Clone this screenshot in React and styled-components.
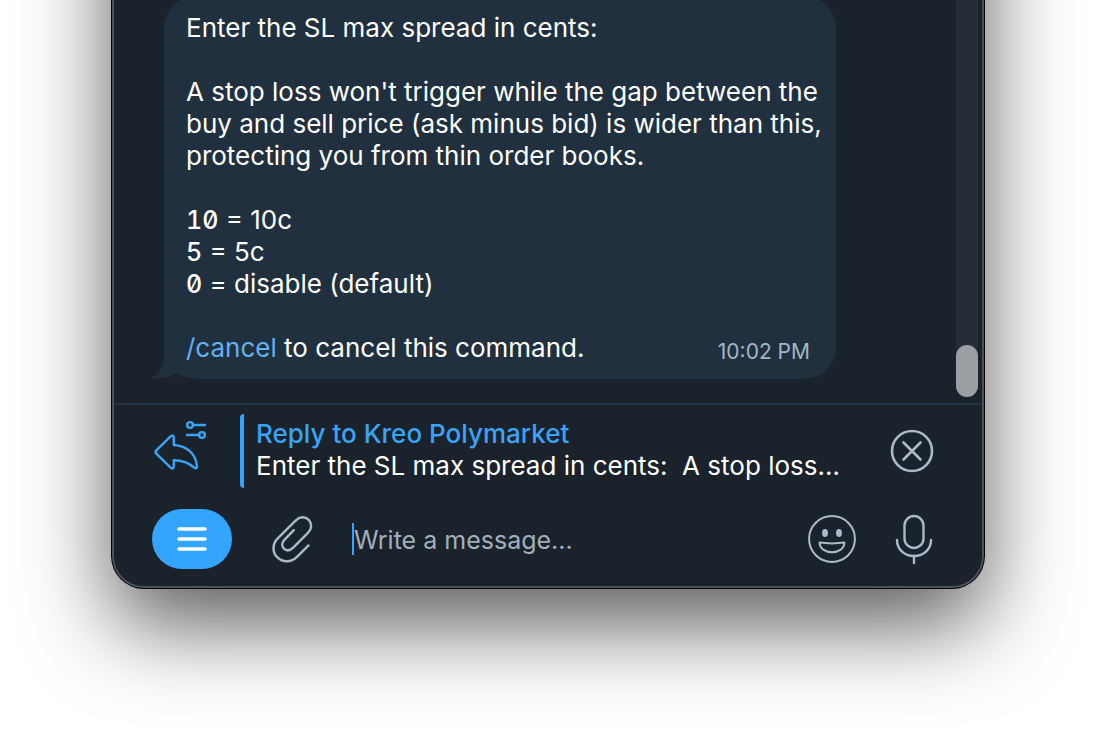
import React, { useState } from 'react'
import styled, { createGlobalStyle } from 'styled-components';

const GlobalStyle = createGlobalStyle`
*{
box-sizing:border-box;
margin:0;
padding:0;
}
body{
background:#ffffff;
font-family:Inter, "Liberation Sans", sans-serif;
overflow:hidden;
}
`;

const Page = styled.div`
height:100vh;
padding:0 112px 149px;
display:flex;
flex-direction:column;
justify-content:flex-end;
overflow:hidden;
`;

const Window = styled.main`
min-height:120vh;
flex-shrink:0;
display:flex;
flex-direction:column;
background:#1a222c;
border:2px solid #4a5159;
border-radius:32px;
box-shadow:0 0 0 1px #000000, 0 36px 88px rgba(0,0,0,0.65);
overflow:hidden;
`;

const Chat = styled.section`
flex:1;
display:flex;
border-bottom:2px solid #26333f;
`;

const Messages = styled.div`
flex:1;
min-width:0;
display:flex;
flex-direction:column;
justify-content:flex-end;
align-items:flex-start;
padding:0 50px 24px;
`;

const Bubble = styled.article`
position:relative;
width:100%;
max-width:672px;
padding:16px 12px 15px 22px;
border-radius:32px;
background:#21303e;
color:#ffffff;
font-size:26px;
line-height:32px;
`;

const Tail = styled.svg`
position:absolute;
left:-12px;
bottom:0;
fill:#21303e;
`;

const Text = styled.p`
min-height:32px;
white-space:pre;
`;

const Code = styled.code`
font-family:inherit;
font-size:25px;
font-weight:500;
font-feature-settings:"tnum", "zero";
`;

const Command = styled.a`
color:#62b1f1;
text-decoration:none;
`;

const LastLine = styled.div`
display:flex;
justify-content:space-between;
align-items:flex-end;
padding-right:14px;
`;

const Time = styled.time`
font-size:21px;
line-height:24px;
color:#a3b5c6;
white-space:nowrap;
`;

const ScrollTrack = styled.div`
width:22px;
margin:0 4px 6px 0;
display:flex;
align-items:flex-end;
border-radius:11px;
background:#252e37;
`;

const ScrollThumb = styled.div`
width:100%;
height:52px;
border-radius:11px;
background:#9b9fa4;
`;

const ReplyBar = styled.section`
height:92px;
padding:0 46px 0 38px;
display:flex;
align-items:center;
`;

const Quote = styled.div`
flex:1;
min-width:0;
height:74px;
margin:0 48px 0 32px;
padding:4px 0 0 12px;
border-left:4px solid #33a5ff;
border-radius:4px 0 0 4px;
font-size:26px;
line-height:32px;
`;

const QuoteTitle = styled.p`
color:#3ba3f5;
font-weight:500;
`;

const QuoteText = styled.p`
color:#ffffff;
white-space:pre;
`;

const Composer = styled.form`
padding:12px 44px 17px 38px;
display:flex;
align-items:center;
`;

const IconButton = styled.button`
width:${props => props.$width || 48}px;
height:48px;
flex-shrink:0;
display:flex;
justify-content:center;
align-items:center;
border:none;
background:none;
color:${props => props.$color || '#a9bacb'};
cursor:pointer;
`;

const MenuButton = styled(IconButton)`
height:60px;
border-radius:30px;
background:#33a5ff;
`;

const Field = styled.div`
flex:1;
min-width:0;
display:flex;
align-items:center;
margin:0 34px 0 36px;
`;

const Caret = styled.span`
width:2px;
height:32px;
flex-shrink:0;
background:#33a5ff;
`;

const Input = styled.input`
flex:1;
min-width:0;
height:36px;
padding-top:2px;
border:none;
outline:none;
background:none;
color:#ffffff;
caret-color:#33a5ff;
font-family:inherit;
font-size:25px;
&::placeholder{
color:#a3afba;
opacity:1;
}
`;

const ComposerActions = styled.div`
display:flex;
gap:34px;
`;

const Icon = styled.svg`
display:block;
flex-shrink:0;
overflow:visible;
fill:none;
stroke:currentColor;
stroke-width:${props => props.$stroke || 2.6};
stroke-linecap:round;
stroke-linejoin:round;
`;

const ClipSlot = styled.div`
margin-left:36px;
`;

const ReplyIcon = () => (
    <Icon width="56" height="56" viewBox="0 2 56 56" $stroke={2.4}>
        <path d="M4.300 32.600c-1.100-1.100-1.100-2.200 0-3.300L18.600 15.400c1.500-1.400 3.200-.8 3.200 1.300v7.300c13 .9 22 8.500 23.200 21.300.2 1.900-1.400 2.500-2.800 1.200-5.400-4.800-11.400-7.300-20.400-7.300v6.300c0 2.100-1.700 2.700-3.200 1.200z" />
        <circle cx="38" cy="4" r="2.900" />
        <path d="M41 4h12M35 14h12" />
        <circle cx="50" cy="14" r="2.900" />
    </Icon>
);

const CloseIcon = () => (
    <Icon width="48" height="48" viewBox="0 0 48 48">
        <circle cx="24" cy="24" r="20" />
        <path d="M15.500 15.500l17 17M32.500 15.500l-17 17" />
    </Icon>
);

const MenuIcon = () => (
    <Icon width="48" height="48" viewBox="0 0 48 48" $stroke={3.6}>
        <path d="M11 14h26M11 24h26M11 34h26" />
    </Icon>
);

const ClipIcon = () => (
    <Icon width="48" height="48" viewBox="2 0 48 48" $stroke={2.4}>
        <path d="M42.500 30.400L31 41.800c-6 5.800-14.300 5.800-19.600.6-5.400-5.400-5.200-13.500.6-19.200L29.600 5.600c4.200-4.200 9.500-4.300 13.100-.8 3.500 3.600 3.400 8.800-.8 13L27.200 32.600c-3.200 3.200-6.800 3.300-9.300 1-2.400-2.500-2.300-6.200.9-9.300L27.800 15.200" />
    </Icon>
);

const SmileIcon = () => (
    <Icon width="48" height="48" viewBox="0 0 48 48" $stroke={2}>
        <circle cx="24" cy="24" r="22.900" />
        <ellipse cx="17" cy="18" rx="3" ry="4" fill="currentColor" stroke="none" />
        <ellipse cx="31" cy="18" rx="3" ry="4" fill="currentColor" stroke="none" />
        <path d="M11.600 27.600q12.400 1.600 24.800 0c0 6-5.600 9.600-12.400 9.600s-12.400-3.600-12.400-9.600z" />
    </Icon>
);

const MicIcon = () => (
    <Icon width="48" height="50" viewBox="0 0 48 50" $stroke={2.4}>
        <rect x="14.500" y="2" width="19" height="32" rx="9.500" />
        <path d="M7 26c0 9 7 16 17 16S41 35 41 26M24 42v7" />
    </Icon>
);

const Message = ({ time }) => {
    return (
        <Bubble>
            <Text>Enter the SL max spread in cents:</Text>
            <Text />
            <Text>A stop loss won't trigger while the gap between the</Text>
            <Text>buy and sell price (ask minus bid) is wider than this,</Text>
            <Text>protecting you from thin order books.</Text>
            <Text />
            <Text><Code>10</Code> = 10c</Text>
            <Text><Code>5</Code> = 5c</Text>
            <Text><Code>0</Code> = disable (default)</Text>
            <Text />
            <LastLine>
                <Text><Command href="#cancel">/cancel</Command> to cancel this command.</Text>
                <Time>{time}</Time>
            </LastLine>
            <Tail width="34" height="30" viewBox="0 0 34 30">
                <path d="M12 0V12C10 20 6 25 0 28.500V30C10 29.800 20 28 27 22L34 10V0z" />
            </Tail>
        </Bubble>
    )
}

const App = () => {
    const [draft, setDraft] = useState('');

    return (
        <>
            <GlobalStyle />
            <Page>
                <Window>
                    <Chat>
                        <Messages>
                            <Message time="10:02 PM" />
                        </Messages>
                        <ScrollTrack>
                            <ScrollThumb />
                        </ScrollTrack>
                    </Chat>
                    <ReplyBar>
                        <IconButton as="span" $width={56} $color="#3ba3f5">
                            <ReplyIcon />
                        </IconButton>
                        <Quote>
                            <QuoteTitle>Reply to Kreo Polymarket</QuoteTitle>
                            <QuoteText>Enter the SL max spread in cents:  A stop loss...</QuoteText>
                        </Quote>
                        <IconButton type="button" aria-label="Cancel reply">
                            <CloseIcon />
                        </IconButton>
                    </ReplyBar>
                    <Composer onSubmit={e => e.preventDefault()}>
                        <MenuButton type="button" $width={80} $color="#ffffff" aria-label="Bot menu">
                            <MenuIcon />
                        </MenuButton>
                        <ClipSlot>
                            <IconButton type="button" aria-label="Attach file">
                                <ClipIcon />
                            </IconButton>
                        </ClipSlot>
                        <Field>
                            {draft === '' && <Caret />}
                            <Input
                                aria-label="Message"
                                placeholder="Write a message..."
                                value={draft}
                                onChange={e => setDraft(e.target.value)}
                            />
                        </Field>
                        <ComposerActions>
                            <IconButton type="button" aria-label="Emoji">
                                <SmileIcon />
                            </IconButton>
                            <IconButton type="button" aria-label="Record voice message">
                                <MicIcon />
                            </IconButton>
                        </ComposerActions>
                    </Composer>
                </Window>
            </Page>
        </>
    )
}
export default App;
